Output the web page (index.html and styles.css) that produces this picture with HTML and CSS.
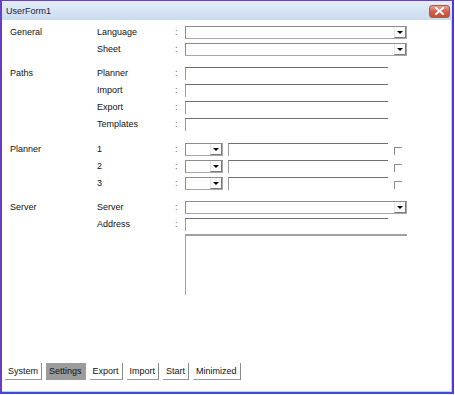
FILE: index.html
```html
<!DOCTYPE html>
<html>
<head>
<meta charset="utf-8">
<link rel="stylesheet" href="styles.css">
</head>
<body>
<div class="window">
  <div class="titlebar">
    <span class="title">UserForm1</span>
    <span class="close"><svg width="11" height="8" viewBox="0 0 11 8"><path d="M2 1 L9 7 M9 1 L2 7" stroke="#fff" stroke-width="2" stroke-linecap="square"/></svg></span>
  </div>
  <div class="content">
    <div class="form">
      <div class="group">
        <div class="group-name">General</div>
        <div class="rows">
          <div class="row"><span class="lbl">Language</span><span class="colon">:</span><div class="combo wide"><span class="drop"></span></div></div>
          <div class="row"><span class="lbl">Sheet</span><span class="colon">:</span><div class="combo wide"><span class="drop"></span></div></div>
        </div>
      </div>
      <div class="group">
        <div class="group-name">Paths</div>
        <div class="rows">
          <div class="row"><span class="lbl">Planner</span><span class="colon">:</span><div class="text path"></div></div>
          <div class="row"><span class="lbl">Import</span><span class="colon">:</span><div class="text path"></div></div>
          <div class="row"><span class="lbl">Export</span><span class="colon">:</span><div class="text path"></div></div>
          <div class="row"><span class="lbl">Templates</span><span class="colon">:</span><div class="text path"></div></div>
        </div>
      </div>
      <div class="group planner">
        <div class="group-name">Planner</div>
        <div class="rows">
          <div class="row"><span class="lbl">1</span><span class="colon">:</span><div class="ctrls"><div class="combo small"><span class="drop"></span></div><div class="text mid"></div><span class="check"></span></div></div>
          <div class="row"><span class="lbl">2</span><span class="colon">:</span><div class="ctrls"><div class="combo small"><span class="drop"></span></div><div class="text mid"></div><span class="check"></span></div></div>
          <div class="row"><span class="lbl">3</span><span class="colon">:</span><div class="ctrls"><div class="combo small"><span class="drop"></span></div><div class="text mid"></div><span class="check"></span></div></div>
        </div>
      </div>
      <div class="group">
        <div class="group-name">Server</div>
        <div class="rows">
          <div class="row"><span class="lbl">Server</span><span class="colon">:</span><div class="combo wide"><span class="drop"></span></div></div>
          <div class="row"><span class="lbl">Address</span><span class="colon">:</span><div class="text path"></div></div>
          <div class="row tall"><span class="lbl"></span><span class="colon"></span><div class="memo"></div></div>
        </div>
      </div>
    </div>
    <div class="tabs">
      <span class="tab">System</span>
      <span class="tab active">Settings</span>
      <span class="tab">Export</span>
      <span class="tab">Import</span>
      <span class="tab">Start</span>
      <span class="tab">Minimized</span>
    </div>
  </div>
</div>
</body>
</html>
```
FILE: styles.css
```css
html, body {
  margin: 0;
  padding: 0;
  background: #ffffff;
}
body {
  font-family: "Liberation Sans", Arial, sans-serif;
  font-size: 9px;
  color: #111;
}
.window {
  width: 454px;
  height: 394px;
  box-sizing: border-box;
  border-top: 1px solid #6a3dc9;
  border-left: 2px solid #6a3dc9;
  border-right: 2px solid #4a3ad8;
  border-bottom: 2px solid #4048e0;
  display: flex;
  flex-direction: column;
  background: #fff;
}
.titlebar {
  height: 19px;
  flex: none;
  display: flex;
  align-items: center;
  justify-content: space-between;
  padding: 0 2px 0 4px;
  background: linear-gradient(#e3edf8, #cadcf0);
}
.title {
  font-size: 9px;
  color: #1b2434;
  margin-top: 1px;
}
.close {
  width: 21px;
  height: 13px;
  box-sizing: border-box;
  border: 1px solid #a85a4c;
  border-radius: 3px;
  background: linear-gradient(#e8a592, #d2604a 50%, #c4503a);
  display: flex;
  align-items: center;
  justify-content: center;
  margin-top: 1px;
}
.close svg { display: block; }
.content {
  flex: 1;
  display: flex;
  flex-direction: column;
  padding: 5px 0 11px 8px;
  border-right: 1px solid #b9d1f5;
  border-bottom: 1px solid #b9d1f5;
}
.form {
  display: flex;
  flex-direction: column;
  gap: 10px;
}
.group {
  display: grid;
  grid-template-columns: 87px 1fr;
}
.group.planner { margin-top: 1px; }
.group-name {
  height: 14px;
  line-height: 15px;
}
.rows {
  display: flex;
  flex-direction: column;
  gap: 3px;
}
.row {
  display: grid;
  grid-template-columns: 78px 10px auto;
  height: 14px;
  align-items: center;
}
.row.tall {
  height: 61px;
  align-items: start;
}
.lbl, .colon {
  line-height: 15px;
}
.colon { color: #555; }
.combo {
  height: 13px;
  box-sizing: border-box;
  border: 1px solid #a8a8a8;
  border-top-color: #8c8c8c;
  border-left-color: #8c8c8c;
  display: flex;
  justify-content: flex-end;
  background: #fff;
}
.combo.wide { width: 222px; }
.combo.small { width: 38px; }
.drop {
  width: 12px;
  height: 11px;
  box-sizing: border-box;
  border-right: 1px solid #7a7a7a;
  border-bottom: 1px solid #7a7a7a;
  border-left: 1px solid #e6e6e6;
  background: #fbfbfb;
  display: flex;
  align-items: center;
  justify-content: center;
}
.drop::after {
  content: "";
  border-left: 3px solid transparent;
  border-right: 3px solid transparent;
  border-top: 3px solid #000;
  margin-top: 1px;
}
.text {
  height: 13px;
  box-sizing: border-box;
  border-top: 1px solid #6e6e6e;
  border-left: 1px solid #9a9a9a;
}
.text.path { width: 203px; }
.text.mid { width: 160px; }
.ctrls {
  display: flex;
  align-items: center;
  gap: 5px;
}
.check {
  width: 8px;
  height: 8px;
  box-sizing: border-box;
  border-top: 1px solid #8a8a8a;
  border-left: 1px solid #8a8a8a;
  margin-left: 1px;
  margin-top: 3px;
}
.memo {
  width: 222px;
  height: 61px;
  box-sizing: border-box;
  border-top: 2px solid #a0a0a0;
  border-left: 1px solid #a0a0a0;
}
.tabs {
  margin-top: auto;
  display: flex;
  gap: 4px;
  margin-left: -5px;
}
.tab {
  height: 17px;
  box-sizing: border-box;
  line-height: 16px;
  padding: 0 3px;
  border-right: 1px solid #8a8a8a;
  border-bottom: 1px solid #9a9a9a;
  color: #111;
}
.tab.active {
  background: #9c9c9c;
  border-right-color: #9c9c9c;
  border-bottom-color: #9c9c9c;
}
```
